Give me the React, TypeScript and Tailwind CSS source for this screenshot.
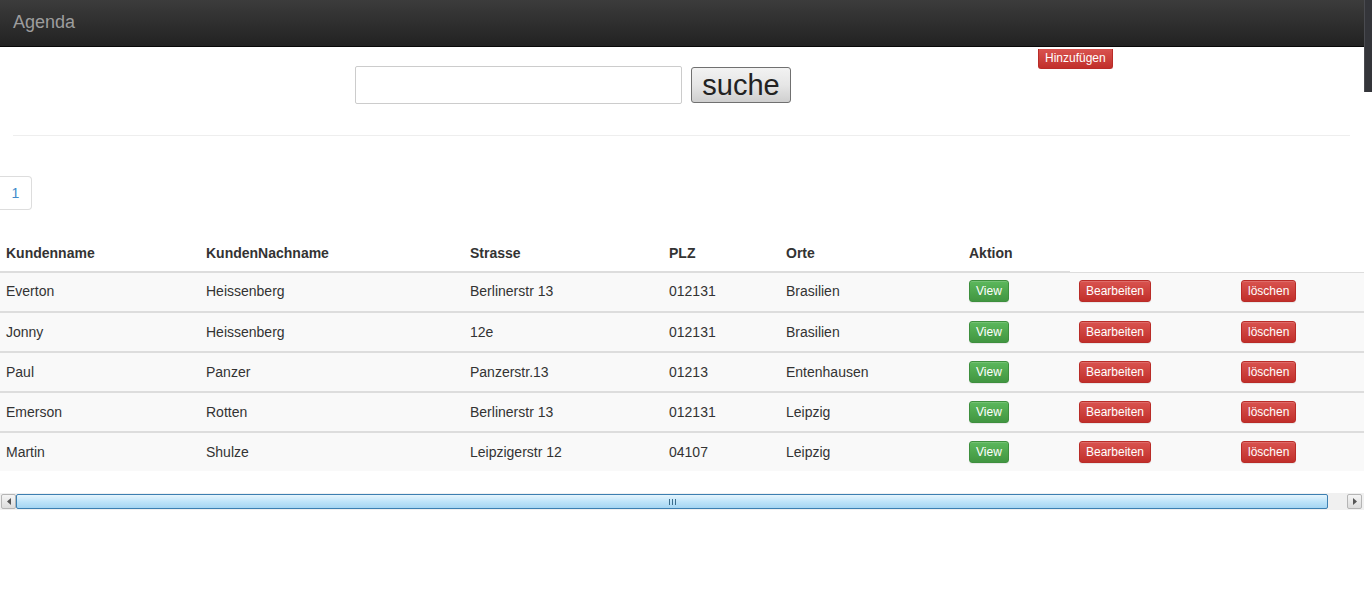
import React from 'react'

interface Kunde {
  vorname: string
  nachname: string
  strasse: string
  plz: string
  ort: string
}

const kunden: Kunde[] = [
  { vorname: 'Everton', nachname: 'Heissenberg', strasse: 'Berlinerstr 13', plz: '012131', ort: 'Brasilien' },
  { vorname: 'Jonny', nachname: 'Heissenberg', strasse: '12e', plz: '012131', ort: 'Brasilien' },
  { vorname: 'Paul', nachname: 'Panzer', strasse: 'Panzerstr.13', plz: '01213', ort: 'Entenhausen' },
  { vorname: 'Emerson', nachname: 'Rotten', strasse: 'Berlinerstr 13', plz: '012131', ort: 'Leipzig' },
  { vorname: 'Martin', nachname: 'Shulze', strasse: 'Leipzigerstr 12', plz: '04107', ort: 'Leipzig' },
]

const cols = 'grid grid-cols-[200px_264px_199px_117px_183px_110px_162px_129px]'

const XsButton: React.FC<{ color: 'red' | 'green'; children: React.ReactNode }> = ({ color, children }) => (
  <button
    className={`px-[6px] py-px text-[12px] leading-[18px] text-white rounded-[3px] border shadow-[inset_0_1px_0_rgba(255,255,255,0.15),0_1px_1px_rgba(0,0,0,0.075)] ${
      color === 'red'
        ? 'bg-gradient-to-b from-[#d9534f] to-[#c12e2a] border-[#b92c28]'
        : 'bg-gradient-to-b from-[#5cb85c] to-[#419641] border-[#3e8f3e]'
    }`}
  >
    {children}
  </button>
)

export default function App() {
  return (
    <div className="relative w-[1372px] h-[615px] bg-white overflow-hidden font-['Liberation_Sans',Arial,sans-serif] text-[14px] leading-[20px] text-[#333]">
      {/* Navbar */}
      <div className="h-[47px] w-[1364px] bg-gradient-to-b from-[#3c3c3c] to-[#222] border-b border-[#080808] flex items-center">
        <span className="ml-[13px] text-[18px] text-[#9d9d9d] -mt-[3px]">Agenda</span>
      </div>

      {/* page scrollbar strip */}
      <div className="absolute right-0 top-0 w-[8px] h-[92px] bg-[#34353a] border-l border-[#4a4b50]" />

      {/* Search row */}
      <div className="flex items-start">
        <input
          type="text"
          className="ml-[355px] mt-[19px] w-[327px] h-[38px] border border-[#ccc] rounded-[2px] bg-white outline-none"
        />
        <button className="ml-[9px] mt-[20px] w-[100px] h-[36px] border border-[#707070] rounded-[3px] bg-gradient-to-b from-[#f2f2f2] via-[#e6e6e6] to-[#cfcfcf] text-[29px] leading-[34px] text-[#222]">
          suche
        </button>
        <div className="ml-[247px]">
          <button className="px-[6px] pt-0 pb-px text-[12px] leading-[18px] text-white rounded-b-[3px] border border-t-0 border-[#b92c28] bg-gradient-to-b from-[#d9534f] to-[#c12e2a]">
            Hinzufügen
          </button>
        </div>
      </div>

      <hr className="mt-[31px] ml-[13px] w-[1337px] border-0 border-t border-[#eee]" />

      {/* Pagination */}
      <div className="mt-[40px] flex">
        <span className="w-[32px] h-[34px] flex items-center justify-center border-y border-r border-[#ddd] rounded-r-[4px] text-[#428bca] text-[14px]">
          1
        </span>
      </div>

      {/* Table */}
      <div className="mt-[25px] w-[1364px]">
        <div className="w-[1070px] border-b border-[#ddd]">
          <div className={`${cols} font-bold h-[36px] items-center`}>
            <div className="pl-[6px]">Kundenname</div>
            <div className="pl-[6px]">KundenNachname</div>
            <div className="pl-[6px]">Strasse</div>
            <div className="pl-[6px]">PLZ</div>
            <div className="pl-[6px]">Orte</div>
            <div className="pl-[6px]">Aktion</div>
          </div>
        </div>
        {kunden.map((k, i) => (
          <div
            key={k.vorname}
            className={`${cols} items-center bg-[#f9f9f9] ${i === 0 ? 'h-[39px] pb-[3px] border-t border-[#ddd]' : 'h-[40px] border-t-2 border-[#ddd]'}`}
          >
            <div className="pl-[6px]">{k.vorname}</div>
            <div className="pl-[6px]">{k.nachname}</div>
            <div className="pl-[6px]">{k.strasse}</div>
            <div className="pl-[6px]">{k.plz}</div>
            <div className="pl-[6px]">{k.ort}</div>
            <div className="pl-[6px]">
              <XsButton color="green">View</XsButton>
            </div>
            <div className="pl-[6px]">
              <XsButton color="red">Bearbeiten</XsButton>
            </div>
            <div className="pl-[6px]">
              <XsButton color="red">löschen</XsButton>
            </div>
          </div>
        ))}
      </div>

      {/* Horizontal scrollbar */}
      <div className="mt-[22px] w-[1364px] h-[17px] bg-[#f0f0f0] flex items-center">
        <div className="w-[15px] h-[15px] ml-px border border-[#b5b5b5] rounded-[2px] bg-gradient-to-b from-[#f5f5f5] to-[#dcdcdc] flex items-center justify-center">
          <svg width="4" height="7" viewBox="0 0 4 7">
            <path d="M4 0 L0 3.5 L4 7 Z" fill="#555" />
          </svg>
        </div>
        <div className="w-[1312px] h-[15px] border border-[#3c7fb1] rounded-[2px] bg-gradient-to-b from-[#e6f5fd] via-[#bfe4f9] to-[#a4d5f2] flex items-center justify-center">
          <div className="flex gap-[2px]">
            <div className="w-px h-[6px] bg-[#3a6d8c]" />
            <div className="w-px h-[6px] bg-[#3a6d8c]" />
            <div className="w-px h-[6px] bg-[#3a6d8c]" />
          </div>
        </div>
        <div className="w-[19px]" />
        <div className="w-[15px] h-[15px] border border-[#b5b5b5] rounded-[2px] bg-gradient-to-b from-[#f5f5f5] to-[#dcdcdc] flex items-center justify-center">
          <svg width="4" height="7" viewBox="0 0 4 7">
            <path d="M0 0 L4 3.5 L0 7 Z" fill="#555" />
          </svg>
        </div>
      </div>
    </div>
  )
}
